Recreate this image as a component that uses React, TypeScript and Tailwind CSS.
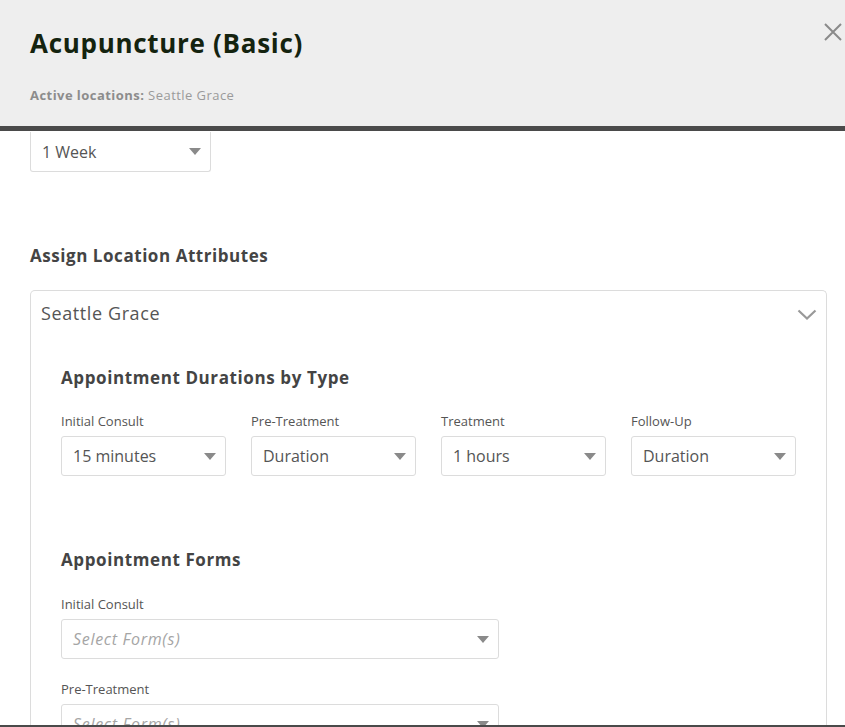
const FONT = { fontFamily: '"Open Sans", "Liberation Sans", sans-serif' };

const DURATIONS = [
  { label: 'Initial Consult', value: '15 minutes' },
  { label: 'Pre-Treatment', value: 'Duration' },
  { label: 'Treatment', value: '1 hours' },
  { label: 'Follow-Up', value: 'Duration' },
];

function Caret() {
  return (
    <svg viewBox="0 0 12 7" className="h-[7px] w-[12px] shrink-0 text-[#8a8a8a]">
      <path d="M0 0h12L6 7Z" fill="currentColor" />
    </svg>
  );
}

function Select({ value, placeholder, className = '' }: { value?: string; placeholder?: string; className?: string }) {
  return (
    <div className={`flex h-[40px] items-center justify-between rounded-[3px] border border-[#dcdcdc] bg-white pl-[11px] pr-[9px] ${className}`}>
      {value ? (
        <span className="text-[16px] text-[#555]">{value}</span>
      ) : (
        <span className="text-[16px] italic tracking-[0.7px] text-[#a5a5a5]">{placeholder}</span>
      )}
      <Caret />
    </div>
  );
}

export default function App() {
  return (
    <div className="flex h-[727px] w-[845px] flex-col overflow-hidden bg-white" style={FONT}>
      <header className="relative h-[131px] shrink-0 border-b-[5px] border-[#4a4a4a] bg-[#eeeeee] px-[30px] pt-[27px]">
        <h1 className="text-[26px] font-bold leading-[32px] tracking-[0.7px] text-[#14230f]">Acupuncture (Basic)</h1>
        <div className="mt-[27px] text-[13px] leading-[18px] tracking-[0.45px] text-[#9a9a9a]">
          <span className="font-bold text-[#8c8c8c]">Active locations:</span> Seattle Grace
        </div>
        <button type="button" aria-label="Close" className="absolute right-[2px] top-[22px] text-[#8a8a8a]">
          <svg viewBox="0 0 20 20" className="h-[20px] w-[20px]">
            <path d="M2 2l16 16M18 2L2 18" stroke="currentColor" strokeWidth="2" />
          </svg>
        </button>
      </header>

      <main className="flex-1 overflow-hidden border-b-2 border-[#4a4a4a] pl-[30px] pr-[18px]">
        <Select value="1 Week" className="mt-[1px] w-[181px] rounded-t-none border-t-0" />

        <h2 className="mt-[72px] text-[17px] font-bold leading-[24px] tracking-[0.55px] text-[#444]">Assign Location Attributes</h2>

        <section className="mt-[22px] rounded-t-[5px] border border-b-0 border-[#dcdcdc] pb-[40px]">
          <div className="flex items-center justify-between pl-[10px] pr-[9px] pt-[10px]">
            <span className="text-[18px] leading-[24px] tracking-[0.6px] text-[#555]">Seattle Grace</span>
            <svg viewBox="0 0 20 11" className="mt-[2px] h-[11px] w-[20px] text-[#999]">
              <path d="M1.5 1.5L10 9.5l8.5-8" fill="none" stroke="currentColor" strokeWidth="2.2" />
            </svg>
          </div>

          <div className="px-[30px]">
            <h3 className="mt-[41px] text-[17px] font-bold leading-[24px] tracking-[0.6px] text-[#444]">Appointment Durations by Type</h3>
            <div className="mt-[22px] grid grid-cols-4 gap-[25px]">
              {DURATIONS.map((d) => (
                <div key={d.label}>
                  <div className="text-[13px] leading-[18px] text-[#555]">{d.label}</div>
                  <Select value={d.value} className="mt-[6px]" />
                </div>
              ))}
            </div>

            <h3 className="mt-[72px] text-[17px] font-bold leading-[24px] tracking-[0.6px] text-[#444]">Appointment Forms</h3>
            <div className="mt-[23px] text-[13px] leading-[18px] text-[#555]">Initial Consult</div>
            <Select placeholder="Select Form(s)" className="mt-[6px] w-[438px]" />
            <div className="mt-[21px] text-[13px] leading-[18px] text-[#555]">Pre-Treatment</div>
            <Select placeholder="Select Form(s)" className="mt-[6px] w-[438px]" />
          </div>
        </section>
      </main>
    </div>
  );
}
